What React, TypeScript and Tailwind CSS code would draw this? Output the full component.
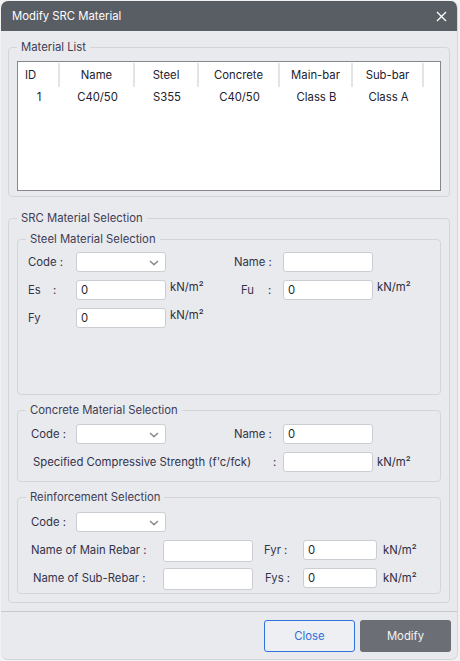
import React from "react";

const Chevron = () => (
  <svg width="10" height="6" viewBox="0 0 10 6" className="absolute right-[6px] top-[7px]">
    <path d="M1 1 L5 4.6 L9 1" fill="none" stroke="#8c8e93" strokeWidth="1.6" />
  </svg>
);

const Select = () => (
  <div className="relative w-[90px] h-[20px] bg-white border border-[#cbcdd2] rounded-[3px]">
    <Chevron />
  </div>
);

const Input = ({ w = "w-[90px]", h = "h-[20px]", value = "" }: { w?: string; h?: string; value?: string }) => (
  <div className={`${w} ${h} bg-white border border-[#cbcdd2] rounded-[3px] flex items-center pl-[4px] text-[#1f1f28]`}>
    {value}
  </div>
);

const Unit = () => <span className="text-[#2e2d40]">kN/m²</span>;

export default function App() {
  const cols = [
    { h: "ID", d: "1", w: "w-[42px]", left: true },
    { h: "Name", d: "C40/50", w: "w-[75px]" },
    { h: "Steel", d: "S355", w: "w-[64px]" },
    { h: "Concrete", d: "C40/50", w: "w-[81px]" },
    { h: "Main-bar", d: "Class B", w: "w-[73px]" },
    { h: "Sub-bar", d: "Class A", w: "w-[71px]" },
  ];
  return (
    <div
      className="w-[460px] h-[661px] bg-[#f2f2f4] pt-px pl-px"
      style={{ fontFamily: "Inter, 'Noto Sans', sans-serif" }}
    >
      <div className="w-[457px] h-[659px] bg-[#e9eaee] rounded-[7px] border-r border-b border-[#d4d6da] flex flex-col overflow-hidden text-[11.3px] text-[#34334a]">
        {/* Title bar */}
        <div className="h-[30px] bg-[#595d64] flex items-center justify-between pl-[11px] pr-[10px] shrink-0">
          <span className="text-white text-[11.3px]">Modify SRC Material</span>
          <svg width="11" height="11" viewBox="0 0 11 11">
            <path d="M1 1 L10 10 M10 1 L1 10" stroke="#ffffff" strokeWidth="1.3" />
          </svg>
        </div>

        <div className="px-[7px] pt-[8px]">
          {/* Material List */}
          <fieldset className="border border-[#d3d5d9] rounded-[4px] px-[8px] pt-[6px] pb-[5px]">
            <legend className="px-[4px] leading-[16px] text-[#3d3c55]">Material List</legend>
            <div className="h-[130px] bg-white border border-[#85878b]">
              <div className="flex">
                {cols.map((c) => (
                  <div
                    key={c.h}
                    className={`${c.w} h-[24px] mt-px border-r-2 border-[#e4e4e6] flex items-center ${c.left ? "pl-[7px]" : "justify-center"} text-[#22212e]`}
                  >
                    {c.h}
                  </div>
                ))}
              </div>
              <div className="flex h-[16px] mt-[2px]">
                {cols.map((c) => (
                  <div key={c.h} className={`${c.w} flex items-center justify-center text-[#22212e]`}>
                    {c.d}
                  </div>
                ))}
              </div>
            </div>
          </fieldset>

          {/* SRC Material Selection */}
          <fieldset className="mt-[13px] border border-[#d3d5d9] rounded-[4px] px-[8px] pt-[5px] pb-[8px]">
            <legend className="px-[4px] leading-[16px] text-[#3d3c55]">SRC Material Selection</legend>

            {/* Steel */}
            <fieldset className="border border-[#d3d5d9] rounded-[4px] px-[8px] pt-[5px] pb-[66px]">
              <legend className="px-[4px] leading-[16px] text-[#3d3c55]">Steel Material Selection</legend>
              <div className="flex flex-col gap-[8px]">
                <div className="flex items-center h-[20px]">
                  <div className="w-[50px] pl-[2px]">Code :</div>
                  <Select />
                  <div className="w-[68px]" />
                  <div className="w-[49px]">Name :</div>
                  <Input />
                </div>
                <div className="flex items-start h-[20px]">
                  <div className="w-[50px] pl-[2px] h-[20px] flex items-center">
                    <span className="w-[25px]">Es</span>
                    <span>:</span>
                  </div>
                  <Input value="0" />
                  <div className="w-[68px] pl-[4px] leading-[14px]">
                    <Unit />
                  </div>
                  <div className="w-[49px] pl-[7px] h-[20px] flex items-center">
                    <span className="w-[27px]">Fu</span>
                    <span>:</span>
                  </div>
                  <Input value="0" />
                  <div className="pl-[4px] leading-[14px]">
                    <Unit />
                  </div>
                </div>
                <div className="flex items-start h-[20px]">
                  <div className="w-[50px] pl-[2px] h-[20px] flex items-center">Fy</div>
                  <Input value="0" />
                  <div className="w-[68px] pl-[4px] leading-[14px]">
                    <Unit />
                  </div>
                </div>
              </div>
            </fieldset>

            {/* Concrete */}
            <fieldset className="mt-[7px] border border-[#d3d5d9] rounded-[4px] px-[8px] pt-[6px] pb-[9px]">
              <legend className="px-[4px] leading-[16px] text-[#3d3c55]">Concrete Material Selection</legend>
              <div className="flex flex-col gap-[8px]">
                <div className="flex items-center h-[20px]">
                  <div className="w-[50px] pl-[5px]">Code :</div>
                  <Select />
                  <div className="w-[68px]" />
                  <div className="w-[49px]">Name :</div>
                  <Input value="0" />
                </div>
                <div className="flex items-center h-[20px]">
                  <div className="w-[247px] pl-[7px]">Specified Compressive Strength (f'c/fck)</div>
                  <div className="w-[10px]">:</div>
                  <Input />
                  <div className="pl-[4px]">
                    <Unit />
                  </div>
                </div>
              </div>
            </fieldset>

            {/* Reinforcement */}
            <fieldset className="mt-[7px] border border-[#d3d5d9] rounded-[4px] px-[8px] pt-[7px] pb-[3px]">
              <legend className="px-[4px] leading-[16px] text-[#3d3c55]">Reinforcement Selection</legend>
              <div className="flex flex-col gap-[8px]">
                <div className="flex items-center h-[20px]">
                  <div className="w-[50px] pl-[5px]">Code :</div>
                  <Select />
                </div>
                <div className="flex items-start h-[20px]">
                  <div className="w-[137px] pl-[5px] h-[20px] flex items-center">Name of Main Rebar :</div>
                  <Input h="h-[22px]" />
                  <div className="w-[50px] pl-[11px] h-[20px] flex items-center">Fyr :</div>
                  <Input w="w-[74px]" value="0" />
                  <div className="pl-[6px] h-[20px] flex items-center">
                    <Unit />
                  </div>
                </div>
                <div className="flex items-start h-[22px]">
                  <div className="w-[137px] pl-[7px] h-[20px] flex items-center">Name of Sub-Rebar :</div>
                  <Input h="h-[22px]" />
                  <div className="w-[50px] pl-[12px] h-[20px] flex items-center">Fys :</div>
                  <Input w="w-[74px]" value="0" />
                  <div className="pl-[6px] h-[20px] flex items-center">
                    <Unit />
                  </div>
                </div>
              </div>
            </fieldset>
          </fieldset>
        </div>

        <div className="mt-[8px] h-px bg-[#c6c8cc]" />

        <div className="flex justify-end gap-[5px] pt-[8px] pr-[6px]">
          <button className="w-[91px] h-[32px] rounded-[3px] border border-[#2f73dc] bg-[#edeff3] text-[#2f6fd8]">
            Close
          </button>
          <button className="w-[91px] h-[32px] rounded-[3px] bg-[#6b6f75] text-[#f2f3f7]">
            Modify
          </button>
        </div>
      </div>
    </div>
  );
}
